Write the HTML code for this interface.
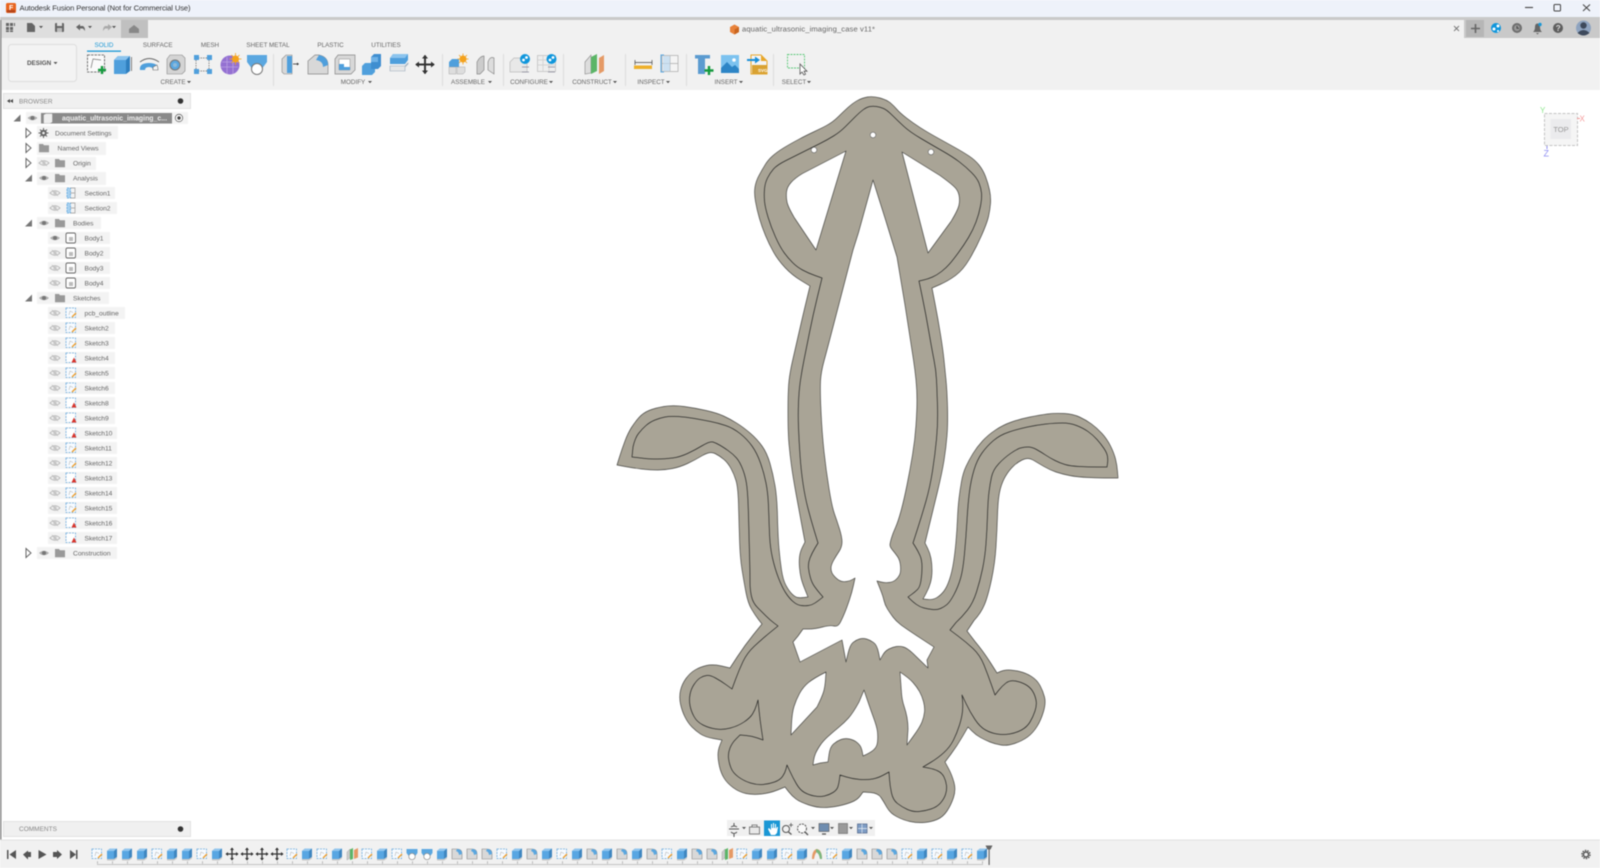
<!DOCTYPE html>
<html><head><meta charset="utf-8"><title>Fusion</title>
<style>html,body{margin:0;padding:0;background:#fff;width:1600px;height:868px;overflow:hidden}svg{display:block;filter:blur(.45px)}text{font-family:"Liberation Sans",sans-serif}</style></head><body>
<svg width="1600" height="868" viewBox="0 0 1600 868" xmlns="http://www.w3.org/2000/svg">
<defs>
<g id="eye"><path d="M-5 0Q0-4.5 5 0Q0 4.500-5 0Z" fill="#b0b0b0"/><circle r="2" fill="#777"/></g>
<g id="eyeh"><path d="M-5 0Q0-4.500 5 0Q0 4.500-5 0Z" fill="none" stroke="#bbb"/><circle r="1.800" fill="#ccc"/><path d="M-3-3L3 3" stroke="#bbb" stroke-width=".7"/></g>
<path id="folder" d="M-5-4h4l1 1.200h5v7h-10z" fill="#999"/>
<path id="topen" d="M-4 3.500h7v-7z" fill="#777"/>
<path id="tclosed" d="M-2-4.500L3 0L-2 4.500Z" fill="#fff" stroke="#666" stroke-width="1"/>
<g id="tsk"><rect x="-5" y="-5" width="9.500" height="9.500" fill="#f7fbff" stroke="#6aa9dc" stroke-width=".8" stroke-dasharray="2 1"/><path d="M-2 2L-1-2L2-.5" fill="none" stroke="#aaa" stroke-width=".5"/><path d="M1 4L5 0" stroke="#f0a030" stroke-width="1.400"/></g>
<g id="tskr"><rect x="-5" y="-5" width="9.500" height="9.500" fill="#fff" stroke="#6aa9dc" stroke-width=".8" stroke-dasharray="2 1"/><path d="M3-.5L5.500 4.500H.5Z" fill="#d9342b"/></g>
<g id="text"><path d="M-5-3L-2-5.500H5V-1L5 3L2 5H-5Z" fill="#3f86c0"/><rect x="-5" y="-3" width="7" height="8" fill="#58a6e2"/><path d="M-5-3L-2-5.500H5L2-3Z" fill="#93c6ee"/><path d="M-5 5h7l3-2v1.500l-3 2h-7z" fill="#c8c8c8"/></g>
<g id="tmove"><path d="M0-6v12M-6 0h12" stroke="#333" stroke-width="1.300"/><path d="M0-6.500l-2 2.500h4zM0 6.500l-2-2.500h4zM-6.500 0l2.500-2v4zM6.500 0l-2.500-2v4z" fill="#333"/></g>
<g id="tfil"><path d="M-5 5V-5H0Q5-5 5 0V5Z" fill="#d8d8d8" stroke="#888" stroke-width=".6"/><path d="M0-5Q5-5 5 0L2 1Q2-2-1-3Z" fill="#5aa7e0"/></g>
<g id="tcon"><path d="M-5-2L-2-5V4L-5 6Z" fill="#ccc" stroke="#999" stroke-width=".4"/><path d="M-2-4.500L1-6V5L-2 6Z" fill="#5cb567"/><path d="M2-4L6-6V3.500L2 5Z" fill="#e59a66"/></g>
<g id="tloft"><path d="M-5.500-5H5.500V-1L2.500 3H-2.500L-5.500-1Z" fill="#5aa7e0"/><circle cy="2.500" r="3.200" fill="#fff" stroke="#888" stroke-width=".7"/></g>
<g id="trev"><path d="M-5 5Q-5-4 0-5Q5-4 5 5H3Q2-1 0-2Q-2-1-3 5Z" fill="#e59a66"/><path d="M-1-5Q5-4 5 5H3Q2-1-1-2Z" fill="#7ab77e"/></g>
<path id="cr" d="M-2-1h4l-2 2.200z" fill="#555"/>
</defs>

<!-- window chrome -->
<rect width="1600" height="868" fill="#fff"/>
<rect width="1600" height="17" fill="#eef2fa"/>
<rect y="17" width="1600" height="3" fill="#c9c9c9"/>
<rect y="20" width="1600" height="18" fill="#dedede"/>
<rect x="121" y="20" width="27" height="18" fill="#c0c0c0"/>
<rect x="148" y="20" width="1316" height="18" fill="#f1f1f1"/>
<rect x="1464" y="20" width="136" height="18" fill="#c9c9c9"/>
<rect x="1466" y="20" width="18" height="17" fill="#b6b6b6"/>
<rect y="38" width="1600" height="52" fill="#f1f1f1"/>
<rect x="0" y="20" width="1.500" height="820" fill="#8a8a8a"/>

<!-- title -->
<rect x="6" y="3" width="10" height="10" rx="1.500" fill="#e8641e"/><rect x="7" y="10" width="8" height="2.500" fill="#b5441a"/><text x="9" y="10" font-size="7" font-weight="bold" fill="#fff">F</text>
<text x="19.500" y="10.500" font-size="7.600" fill="#333" textLength="171" lengthAdjust="spacing">Autodesk Fusion Personal (Not for Commercial Use)</text>
<path d="M1525 7.500h8" stroke="#444" stroke-width="1.100"/><rect x="1554" y="4.500" width="6.500" height="6.500" rx="1" fill="none" stroke="#444" stroke-width="1"/><path d="M1583 4.500l7 6.500M1590 4.500l-7 6.500" stroke="#444" stroke-width="1"/>

<!-- quick access -->
<g fill="#666"><rect x="6" y="23" width="3" height="3"/><rect x="10" y="23" width="3" height="3"/><rect x="14" y="23" width="1" height="3"/><rect x="6" y="27" width="3" height="3"/><rect x="10" y="27" width="3" height="3"/><rect x="6" y="30.500" width="3" height="1.500"/><rect x="10" y="30.500" width="3" height="1.500"/></g>
<path d="M27 23h5l3 3v6h-8z" fill="#666"/><use href="#cr" x="41" y="27"/>
<rect x="55" y="23" width="9" height="9" rx="1" fill="#666"/><rect x="57" y="23" width="5" height="3" fill="#ddd"/><rect x="57" y="28" width="5" height="4" fill="#bbb"/>
<path d="M76 27l4-3v2h3q2 1 2 5l-2-2.500h-3v2z" fill="#666"/><use href="#cr" x="90" y="27"/>
<path d="M112 27l-4-3v2h-3q-2 1-2 5l2-2.500h3v2z" fill="#aaa"/><use href="#cr" x="114" y="27"/>
<path d="M129 29l5-4 5 4v4h-10z" fill="#888"/>

<!-- doc tab -->
<path d="M730 27l4.500-2.500 4.500 2.500v5l-4.500 2.500-4.500-2.500z" fill="#e8823a"/><path d="M734.500 29.500v5l4.500-2.500v-5z" fill="#c9651f"/>
<text x="742" y="31.500" font-size="7.600" fill="#666" textLength="133" lengthAdjust="spacing">aquatic_ultrasonic_imaging_case v11*</text>
<path d="M1454 26l5 5M1459 26l-5 5" stroke="#777" stroke-width=".9"/>
<path d="M1471 28.500h9M1475.500 24v9" stroke="#666" stroke-width="1.600"/>
<circle cx="1496" cy="28" r="5" fill="#0f96dc"/><circle cx="1498" cy="26" r="1.500" fill="#fff"/><circle cx="1494" cy="29" r="1.500" fill="#fff"/><circle cx="1498" cy="31" r="1" fill="#fff"/>
<circle cx="1517" cy="28" r="5" fill="#6e6e6e"/><circle cx="1517" cy="28" r="3" fill="#999"/><path d="M1517 26v2.300h2" stroke="#444" fill="none"/>
<path d="M1533 32q2-1.500 2-5t2.500-3.500 2.500 3.500 2 5zM1536 33h3l-1.500 1.500z" fill="#666"/><circle cx="1540" cy="24.500" r="1.700" fill="#1a97d5"/>
<circle cx="1558" cy="28" r="5" fill="#5e5e5e"/><text x="1555.700" y="31" font-size="8" font-weight="bold" fill="#ddd">?</text>
<circle cx="1583.500" cy="28" r="7.500" fill="#8fa4c0"/><circle cx="1583.500" cy="25.500" r="3.200" fill="#3e4a5c"/><path d="M1577.500 33q6-6 12 0q-6 5-12 0z" fill="#3e4a5c"/>

<!-- tabs -->
<g font-size="6.300" fill="#666" text-anchor="middle">
<text x="104" y="47" fill="#1a97d5">SOLID</text><text x="157.700" y="47">SURFACE</text><text x="210" y="47">MESH</text><text x="268" y="47">SHEET METAL</text><text x="330.500" y="47">PLASTIC</text><text x="386" y="47">UTILITIES</text>
</g>
<rect x="87" y="50.500" width="34" height="1.300" fill="#1a97d5"/>
<rect x="8.500" y="44.500" width="68" height="37" rx="3" fill="#f3f3f3" stroke="#ddd"/>
<text x="27" y="65" font-size="6.300" font-weight="bold" fill="#555">DESIGN</text><use href="#cr" x="55.500" y="63"/>

<!-- labels -->
<g font-size="6.300" fill="#666" text-anchor="middle">
<text x="173" y="84">CREATE</text><text x="353" y="84">MODIFY</text><text x="468" y="84">ASSEMBLE</text><text x="529" y="84">CONFIGURE</text><text x="592" y="84">CONSTRUCT</text><text x="651" y="84">INSPECT</text><text x="726" y="84">INSERT</text><text x="794" y="84">SELECT</text>
</g>
<use href="#cr" x="189" y="82"/><use href="#cr" x="370" y="82"/><use href="#cr" x="490" y="82"/><use href="#cr" x="551" y="82"/><use href="#cr" x="615" y="82"/><use href="#cr" x="668" y="82"/><use href="#cr" x="741" y="82"/><use href="#cr" x="809" y="82"/>
<g fill="#dcdcdc"><rect x="273" y="54" width="1" height="32"/><rect x="442" y="54" width="1" height="32"/><rect x="503" y="54" width="1" height="32"/><rect x="563" y="54" width="1" height="32"/><rect x="625" y="54" width="1" height="32"/><rect x="686" y="54" width="1" height="32"/><rect x="773" y="54" width="1" height="32"/></g>

<!-- toolbar icons -->
<rect x="87.500" y="55" width="17" height="17" fill="#fafafa" stroke="#555" stroke-width=".8" stroke-dasharray="2.500 1"/><path d="M91 68L93 59L101 60" fill="none" stroke="#777" stroke-width=".7"/><path d="M102 66v8M98 70h8" stroke="#159a3e" stroke-width="2.400"/>
<path d="M114 60l4-4h12v15l-4 3h-12z" fill="#2f7fbf"/><rect x="114" y="60" width="12" height="14" fill="#4f9fdc"/><path d="M114 60l4-4h12l-4 4z" fill="#8cc4ee"/><path d="M131.500 57v14" stroke="#666" stroke-width=".8"/>
<path d="M140 70q-1-7 9-7q10 0 9 7h-5q0-3-4-3t-4 3z" fill="#4f9fdc"/><path d="M153 70h5q0-3-1-5l-4 2z" fill="#f4f4f4" stroke="#666" stroke-width=".6"/><path d="M140 62q9-7 19 0" fill="none" stroke="#666" stroke-width=".9"/>
<path d="M167 59l3-4h12l3 3v13l-3 3h-15z" fill="#d4d4d4" stroke="#888" stroke-width=".6"/><circle cx="175" cy="65" r="5" fill="#5aa7e0" stroke="#777"/><circle cx="175" cy="65" r="2" fill="#8db9da"/>
<path d="M198 58h9M198 71h9M196 60v9M209 60v9" stroke="#666" stroke-width=".7" stroke-dasharray="1.500 1"/><g fill="#4f9fdc"><rect x="194" y="55" width="5" height="5"/><rect x="207" y="55" width="5" height="5"/><rect x="194" y="69" width="5" height="5"/><rect x="207" y="69" width="5" height="5"/></g>
<circle cx="230" cy="65" r="9.500" fill="#9470d2"/><path d="M222 62h16M221 67h17M227 57v17M233 57v17" stroke="#b9a0e2" stroke-width=".8"/><circle cx="235.500" cy="59" r="3.500" fill="#f4a21d"/><path d="M235.500 53v12M229.500 59h12M231.500 55l8 8M239.500 55l-8 8" stroke="#f4a21d" stroke-width=".8"/>
<path d="M247 55h20v7l-6 8h-8l-6-8z" fill="#5aa7e0"/><circle cx="257" cy="69" r="5.500" fill="#fff" stroke="#777"/>
<path d="M282 59l4-4h6v19h-8l-2-2z" fill="#d8d8d8" stroke="#888" stroke-width=".6"/><rect x="287" y="56" width="5" height="17" fill="#4f9fdc"/><path d="M293 64h5" stroke="#555"/><path d="M299 64l-2-1.500v3z" fill="#333"/>
<path d="M308 74V61L315 55H319Q328 57 328 65V74Z" fill="#d8d8d8" stroke="#888" stroke-width=".7"/><path d="M319 55Q328 57 328 65L323 67Q323 61 316 60Z" fill="#4f9fdc"/>
<path d="M335 59l3-4h17v15l-4 4h-16z" fill="#d8d8d8" stroke="#888" stroke-width=".7"/><path d="M339 59h11v11h-11z" fill="#fff" stroke="#888" stroke-width=".5"/><path d="M339 64h5v3h6v3h-11z" fill="#4f9fdc"/>
<path d="M362 66l3-3h10v9l-3 3h-10z" fill="#4f9fdc"/><path d="M371 57l3-3h7v12l-3 3h-7z" fill="#3f8ed0"/><path d="M371 57h7v5h-7z" fill="#6fb2e6"/>
<path d="M390 58l3-4h15v6l-3 4h-15z" fill="#4f9fdc"/><path d="M390 58h15l3-4h-15z" fill="#8cc4ee"/><path d="M390 66h15l3-3v1l-3 3v4h-15z" fill="#e7e7e7" stroke="#9ab" stroke-width=".6"/>
<g transform="translate(425 64.500) scale(1.500)"><use href="#tmove"/></g>
<path d="M449 62l3-3h7v8h-10zM449 67h7v7h-7zM457 67h8v5l-2 2h-6z" fill="#4f9fdc"/><path d="M449 67h7v7h-7zM457 67h8v5l-2 2h-6z" fill="#ddd" stroke="#999" stroke-width=".4"/><circle cx="463" cy="59" r="3.500" fill="#f4a21d"/><path d="M463 53.500v11M457.500 59h11M459 55l8 8M467 55l-8 8" stroke="#f4a21d" stroke-width=".8"/>
<path d="M477 74V62Q480 56 484 56V70L480 74Z" fill="#ccc" stroke="#888" stroke-width=".7"/><path d="M488 62Q490 56 494 58V74L488 70Z" fill="#ddd" stroke="#888" stroke-width=".7"/>
<path d="M510 62l4-4h13v14h-17z" fill="#e8e8e8" stroke="#bbb" stroke-width=".7"/><circle cx="525" cy="59" r="5" fill="#0f96dc"/><circle cx="526.500" cy="57.500" r="1.400" fill="#fff"/><circle cx="523.500" cy="60" r="1.400" fill="#fff"/><path d="M522 67h7M522 72h7" stroke="#889" stroke-width=".8"/>
<rect x="537.500" y="55.500" width="18" height="16" fill="#eee" stroke="#bbb" stroke-width=".7"/><path d="M537.500 60h18M537.500 65h18M543 56v15M549 56v15" stroke="#ccc" stroke-width=".7"/><circle cx="551.500" cy="59" r="5" fill="#0f96dc"/><circle cx="553" cy="57.500" r="1.400" fill="#fff"/><circle cx="550" cy="60" r="1.400" fill="#fff"/><path d="M548 67h7M548 72h7" stroke="#889" stroke-width=".8"/>
<path d="M585 62l6-7v18l-6 1z" fill="#ddd" stroke="#888" stroke-width=".6"/><path d="M591 57l6-3v17l-6 3z" fill="#5cb567"/><path d="M599 58l5-3v16l-5 3z" fill="#e59a66"/>
<path d="M635 60v5M652 60v5M635 62.500h17" stroke="#444" stroke-width=".7"/><rect x="634" y="65.500" width="18" height="3.500" fill="#eeb02a"/>
<rect x="662" y="55.500" width="16" height="16" fill="#f4f4f4" stroke="#aaa" stroke-width=".7"/><path d="M670 56v15M662 63.500h16" stroke="#aaa" stroke-width=".7"/><path d="M664 55h-3v17h3" fill="none" stroke="#5aa7e0" stroke-width="1"/><rect x="663" y="56" width="7" height="15" fill="#bcd9f0" opacity=".7"/>
<rect x="695" y="55" width="15" height="3.500" fill="#5b9bd0"/><path d="M698 58.500h7V74h-7z" fill="#5b9bd0"/><path d="M709 66v9M704.500 70.500h9" stroke="#159a3e" stroke-width="2.400"/>
<rect x="721" y="55" width="18" height="18" fill="#7cc2ef"/><circle cx="734" cy="60" r="1.800" fill="#fff"/><path d="M721 73v-5l6-6 5 5 3-2 4 4v4z" fill="#2d85c6"/>
<path d="M751 55h10l6 6v13h-16z" fill="#f4f4f4" stroke="#e8a72a"/><path d="M761 55v6h6z" fill="#e8a72a"/><rect x="752" y="65" width="15" height="9" fill="#d9a232"/><text x="758" y="72" font-size="4.500" font-weight="bold" fill="#fff">SVG</text><path d="M747 60h9" stroke="#1a8fd8" stroke-width="2"/><path d="M760 60l-5-3.500v7z" fill="#1a8fd8"/>
<rect x="787.500" y="54.500" width="17" height="13.500" fill="none" stroke="#5dc97a" stroke-width=".9" stroke-dasharray="2 1"/><path d="M800 64v10l2-2 2 3 1.500-.8-1.500-3h3z" fill="#fff" stroke="#555" stroke-width=".8"/>

<!-- view cube -->
<rect x="1544.500" y="113.500" width="33" height="32" fill="#f5f5f5" stroke="#c4c4c4" stroke-dasharray="3 1.500"/><rect x="1550.500" y="119" width="20.500" height="20" fill="#ebebed"/>
<text x="1561" y="132" font-size="7.500" fill="#999" text-anchor="middle">TOP</text>
<text x="1540" y="113" font-size="8" fill="#8fe88f">Y</text><text x="1579.500" y="121.500" font-size="8" fill="#f59a9a">X</text><text x="1543.500" y="156.500" font-size="9" fill="#8f8ff2">Z</text>
<path d="M1577 118.500h3" stroke="#f59a9a"/><path d="M1547 146v3" stroke="#8f8ff2"/>

<!-- browser -->
<rect x="3.500" y="93.500" width="187" height="15" fill="#f0f0f0" stroke="#e2e2e2"/>
<path d="M7 101l3-2v4zM10 101l3-2v4z" fill="#444"/><text x="19" y="103.500" font-size="6.500" fill="#888">BROWSER</text><circle cx="180.500" cy="101" r="2.800" fill="#333"/>
<rect x="26" y="112" width="162" height="12" fill="#f3f3f3"/>
<use href="#topen" x="17.500" y="118"/><use href="#eye" x="32.500" y="118"/>
<rect x="41" y="113" width="131" height="10.500" fill="#8a8a8a"/><path d="M44 115l2-1h6v8l-2 1h-6z" fill="#eee" stroke="#fff" stroke-width=".4"/>
<text x="62" y="120.500" font-size="6.900" font-weight="bold" fill="#eee" textLength="105" lengthAdjust="spacing">aquatic_ultrasonic_imaging_c...</text>
<circle cx="179" cy="118" r="3.700" fill="#fff" stroke="#666" stroke-width=".8"/><circle cx="179" cy="118" r="1.700" fill="#444"/>

<g fill="#f3f3f3">
<rect x="37" y="126" width="81" height="13"/><rect x="37" y="142" width="69" height="13"/><rect x="37" y="157" width="59" height="13"/><rect x="37" y="172" width="69" height="13"/>
<rect x="48" y="187" width="67" height="12"/><rect x="48" y="202" width="69" height="12"/><rect x="37" y="217" width="64" height="12"/>
<rect x="48" y="232" width="62" height="12"/><rect x="48" y="247" width="62" height="12"/><rect x="48" y="262" width="62" height="12"/><rect x="48" y="277" width="62" height="12"/>
<rect x="37" y="292" width="72" height="12"/><rect x="48" y="307" width="77" height="12"/>
<rect x="48" y="322" width="67" height="12"/><rect x="48" y="337" width="67" height="12"/><rect x="48" y="352" width="67" height="12"/><rect x="48" y="367" width="67" height="12"/><rect x="48" y="382" width="67" height="12"/><rect x="48" y="397" width="67" height="12"/><rect x="48" y="412" width="67" height="12"/>
<rect x="48" y="427" width="69" height="12"/><rect x="48" y="442" width="69" height="12"/><rect x="48" y="457" width="69" height="12"/><rect x="48" y="472" width="69" height="12"/><rect x="48" y="487" width="69" height="12"/><rect x="48" y="502" width="69" height="12"/><rect x="48" y="517" width="69" height="12"/><rect x="48" y="532" width="69" height="12"/>
<rect x="37" y="547" width="80" height="12"/>
</g>
<use href="#tclosed" x="28" y="133"/><use href="#tclosed" x="28" y="148"/><use href="#tclosed" x="28" y="163"/><use href="#tclosed" x="28" y="553"/>
<use href="#topen" x="29" y="178"/><use href="#topen" x="29" y="223"/><use href="#topen" x="29" y="298"/>
<circle cx="43.500" cy="133" r="3.300" fill="#666"/><path d="M43.500 128v10M38.500 133h10M40 129.500l7 7M47 129.500l-7 7" stroke="#666" stroke-width="1"/><circle cx="43.500" cy="133" r="1.300" fill="#f3f3f3"/>
<use href="#folder" x="44" y="148"/>
<use href="#eyeh" x="44" y="163"/><use href="#folder" x="60" y="163"/>
<use href="#eye" x="44" y="178"/><use href="#folder" x="60" y="178"/>
<use href="#eye" x="44" y="223"/><use href="#folder" x="60" y="223"/>
<use href="#eye" x="44" y="298"/><use href="#folder" x="60" y="298"/>
<use href="#eye" x="44" y="553"/><use href="#folder" x="60" y="553"/>
<rect x="67" y="188" width="3.500" height="10" fill="#a8d0ef" stroke="#5aa7e0" stroke-width=".8" stroke-dasharray="2 1"/><path d="M70.500 188h4.500v10h-4.500M70.500 193h4.500" fill="none" stroke="#999" stroke-width=".7"/>
<rect x="67" y="203" width="3.500" height="10" fill="#a8d0ef" stroke="#5aa7e0" stroke-width=".8" stroke-dasharray="2 1"/><path d="M70.500 203h4.500v10h-4.500M70.500 208h4.500" fill="none" stroke="#999" stroke-width=".7"/>
<use href="#eyeh" x="55" y="193"/><use href="#eyeh" x="55" y="208"/>
<use href="#eye" x="55" y="238"/><use href="#eyeh" x="55" y="253"/><use href="#eyeh" x="55" y="268"/><use href="#eyeh" x="55" y="283"/>
<g fill="#fff" stroke="#666" stroke-width=".9"><rect x="66" y="233" width="9.500" height="10" rx="1.500"/><rect x="66" y="248" width="9.500" height="10" rx="1.500"/><rect x="66" y="263" width="9.500" height="10" rx="1.500"/><rect x="66" y="278" width="9.500" height="10" rx="1.500"/></g>
<g fill="#bbb"><rect x="69" y="237" width="4" height="4"/><rect x="69" y="252" width="4" height="4"/><rect x="69" y="267" width="4" height="4"/><rect x="69" y="282" width="4" height="4"/></g>
<use href="#eyeh" x="55" y="313"/><use href="#eyeh" x="55" y="328"/><use href="#eyeh" x="55" y="343"/><use href="#eyeh" x="55" y="358"/><use href="#eyeh" x="55" y="373"/><use href="#eyeh" x="55" y="388"/><use href="#eyeh" x="55" y="403"/><use href="#eyeh" x="55" y="418"/><use href="#eyeh" x="55" y="433"/><use href="#eyeh" x="55" y="448"/><use href="#eyeh" x="55" y="463"/><use href="#eyeh" x="55" y="478"/><use href="#eyeh" x="55" y="493"/><use href="#eyeh" x="55" y="508"/><use href="#eyeh" x="55" y="523"/><use href="#eyeh" x="55" y="538"/>
<use href="#tsk" x="71" y="313"/><use href="#tsk" x="71" y="328"/><use href="#tsk" x="71" y="343"/><use href="#tskr" x="71" y="358"/><use href="#tsk" x="71" y="373"/><use href="#tsk" x="71" y="388"/><use href="#tskr" x="71" y="403"/><use href="#tskr" x="71" y="418"/><use href="#tskr" x="71" y="433"/><use href="#tsk" x="71" y="448"/><use href="#tsk" x="71" y="463"/><use href="#tskr" x="71" y="478"/><use href="#tsk" x="71" y="493"/><use href="#tsk" x="71" y="508"/><use href="#tskr" x="71" y="523"/><use href="#tskr" x="71" y="538"/>
<g font-size="6.700" fill="#666">
<text x="55" y="135.500">Document Settings</text><text x="57.500" y="150.500">Named Views</text><text x="73" y="165.500">Origin</text><text x="73" y="180.500">Analysis</text>
<text x="84.500" y="195.500">Section1</text><text x="84.500" y="210.500">Section2</text><text x="73" y="225.500">Bodies</text>
<text x="84.500" y="240.500">Body1</text><text x="84.500" y="255.500">Body2</text><text x="84.500" y="270.500">Body3</text><text x="84.500" y="285.500">Body4</text>
<text x="73" y="300.500">Sketches</text><text x="84.500" y="315.500">pcb_outline</text>
<text x="84.500" y="330.500">Sketch2</text><text x="84.500" y="345.500">Sketch3</text><text x="84.500" y="360.500">Sketch4</text><text x="84.500" y="375.500">Sketch5</text><text x="84.500" y="390.500">Sketch6</text><text x="84.500" y="405.500">Sketch8</text><text x="84.500" y="420.500">Sketch9</text>
<text x="84.500" y="435.500">Sketch10</text><text x="84.500" y="450.500">Sketch11</text><text x="84.500" y="465.500">Sketch12</text><text x="84.500" y="480.500">Sketch13</text><text x="84.500" y="495.500">Sketch14</text><text x="84.500" y="510.500">Sketch15</text><text x="84.500" y="525.500">Sketch16</text><text x="84.500" y="540.500">Sketch17</text>
<text x="73" y="555.500">Construction</text>
</g>

<!-- comments -->
<rect x="3.500" y="821.500" width="187" height="15" fill="#f0f0f0" stroke="#e2e2e2"/>
<text x="19" y="831" font-size="6.500" fill="#888">COMMENTS</text><circle cx="180.500" cy="829" r="2.800" fill="#333"/>

<!-- model -->
<path fill="#a9a496" fill-rule="evenodd" stroke="#4a4a46" stroke-width=".7" stroke-linejoin="round" d="M880 98Q873 96 867.500 97Q862 98 857.500 100.500Q853 103 848 107.500Q843 112 838 117Q833 122 826.500 125.500Q820 129 813.500 132Q807 135 798.500 139.500Q790 144 783.500 148Q777 152 772.500 156Q768 160 765 165Q762 170 759 175.500Q756 181 755 187Q754 193 755.500 201.500Q757 210 759.500 218.500Q762 227 765.500 235.500Q769 244 773.500 252Q778 260 785 267.500Q792 275 801 280.500L810 286L806.500 300.500Q803 315 799 332.500Q795 350 792.500 361Q790 372 789 381Q788 390 788 411.500Q788 433 789 444Q790 455 791.500 466Q793 477 796 493.500Q799 510 802 526L805 542L802.500 547Q800 552 799.500 557Q799 562 799.500 567.500Q800 573 801 577.500Q802 582 805 589.500L808 597L804 597.500Q800 598 797.500 597.500Q795 597 792 594Q789 591 786 585.500Q783 580 781.500 570Q780 560 779 548.500Q778 537 777.500 517Q777 497 775 485.500Q773 474 770 463.500Q767 453 762 446Q757 439 750 433Q743 427 736.500 423Q730 419 723.500 416Q717 413 706 410.500Q695 408 684 406.500Q673 405 664 406.500Q655 408 649 410.500Q643 413 639 417.500Q635 422 631.500 427.500Q628 433 625 441Q622 449 619.500 457L617 465L625 466.500Q633 468 641.500 469Q650 470 657.500 470Q665 470 672.500 468.500Q680 467 687.500 463.500Q695 460 702.500 455.500Q710 451 715 453.500Q720 456 724 459.500Q728 463 731 468.500Q734 474 736 480.500Q738 487 738.500 503.500Q739 520 739.500 538.500Q740 557 742 569.500Q744 582 746 592.500Q748 603 751.500 609Q755 615 758.500 619.500L762 624L753.500 634.500Q745 645 737.500 656.500L730 668L721.500 666Q713 664 706.500 665.500Q700 667 695 670Q690 673 686 678.500Q682 684 680.500 690.500Q679 697 680.500 704Q682 711 685 717Q688 723 692 727Q696 731 700.500 734Q705 737 713.500 738.500L722 740L720 745Q718 750 718 755Q718 760 719.500 766.500Q721 773 724 778Q727 783 733 787.500Q739 792 746 793.500Q753 795 761.500 794Q770 793 777.500 790L785 787L788.500 791.500Q792 796 796 799Q800 802 809 805Q818 808 826.500 807.500Q835 807 842.500 805Q850 803 854 801Q858 799 860.500 795.500L863 792L870.500 792.500Q878 793 881 797.500Q884 802 887 807.500Q890 813 896.500 816.500Q903 820 910 821.500Q917 823 924 822.500Q931 822 937 819.500Q943 817 947 811Q951 805 953.500 797.500Q956 790 954 782.500Q952 775 948.500 768.500L945 762L951 754Q957 746 962.500 736.500L968 727L972 731Q976 735 980.500 737.500Q985 740 990 742Q995 744 1001 745Q1007 746 1014.500 743.500Q1022 741 1027.500 737Q1033 733 1037 726.500Q1041 720 1043.500 711.500Q1046 703 1044.500 697Q1043 691 1040 685.500Q1037 680 1031.500 676.500Q1026 673 1019.500 671.500Q1013 670 1008.500 670Q1004 670 1000.500 671.500L997 673L990 662Q983 651 975 641.500L967 631L974 620.500Q981 613 984.500 604.500Q988 596 991.500 579.500Q995 563 996 546.500Q997 530 997.500 515Q998 500 999.500 492.500Q1001 485 1004 479Q1007 473 1011.500 468Q1016 463 1022 460Q1028 457 1033 460Q1038 463 1044 466.500Q1050 470 1056 472Q1062 474 1069.500 475.500Q1077 477 1088.500 477.500Q1100 478 1109 478L1118 478L1117.500 471.500Q1117 465 1115.500 459Q1114 453 1110.500 446Q1107 439 1102 433.500Q1097 428 1091.500 424Q1086 420 1079.500 417Q1073 414 1064 413.500Q1055 413 1047.500 414Q1040 415 1030 417Q1020 419 1011.500 422Q1003 425 995.500 430Q988 435 982.500 441Q977 447 973 453.500Q969 460 966 466.500Q963 473 961.500 481.500Q960 490 959 498.500Q958 507 957.500 518.500Q957 530 956 541.500Q955 553 953.500 562.500Q952 572 949.500 579.500Q947 587 944 591Q941 595 937 597.500Q933 600 928 599.500L923 599L926 593.500Q929 588 930.500 582.500Q932 577 932 570.500Q932 564 931 558.500Q930 553 927.500 548L925 543L929 526.500Q933 510 937.500 491.500Q942 473 944 460.500Q946 448 947 435.500Q948 423 947.500 406.500Q947 390 946 380Q945 370 944 360Q943 350 940.500 334.500Q938 319 935 303.500L932 288L940 284.500Q948 281 955.500 275.500Q963 270 969.500 259Q976 248 981.500 235.500Q987 223 988.500 216.500Q990 210 990.500 203.500Q991 197 989.500 190Q988 183 985.500 176.500Q983 170 979 165Q975 160 969 156Q963 152 954 147Q945 142 936 137Q927 132 920 127.500Q913 123 906.500 118Q900 113 897 109.500Q894 106 890.500 103Q887 100 880 98Z
M846 151L802.500 173.500Q795 178 791 182.500Q787 187 786.500 192Q786 197 787 202Q788 207 794.500 218L816 250Z
M902 152L940 175.500Q949 182 953.500 186Q958 190 959 195Q960 200 959 205Q958 210 951 221.500L928 253Z
M873 180L858.500 232.500L853 250L846.500 275Q840 300 833.500 325Q827 350 824 361Q821 372 820.500 381Q820 390 821 411.500Q822 433 824 451.500Q826 470 829 488.500Q832 507 834.500 514Q837 521 839.500 529Q842 537 842 542Q842 547 839 551.500Q836 556 833.500 560.500Q831 565 831 568Q831 571 832 573Q833 575 835.500 577.500Q838 580 840.500 581Q843 582 846.500 581.500Q850 581 852.500 579.500L855 578L853.500 585Q852 592 849.500 599.500Q847 607 845 612Q843 617 840.500 622Q838 627 834 626Q830 625 822.500 627Q815 629 809 629L803 629L798 636L793 642L796.500 652L800 662L821 651L842 640L846 662L848 653.500Q850 645 853 642.500Q856 640 859.500 639Q863 638 866.500 639Q870 640 873.500 642.500Q877 645 878.500 652.500L880 660L882.500 655.500Q885 651 889 649Q893 647 896.500 646.500Q900 646 903.500 647Q907 648 912.500 653L928 668L927 660L934 647L919.500 637.500Q905 628 900.500 624.500Q896 621 893 617Q890 613 887.500 609Q885 605 884 600.500Q883 596 880 588.500L877 581L881 582Q885 583 889 582.500Q893 582 895.500 580Q898 578 899.500 575Q901 572 900.500 566Q900 560 897.500 556.500Q895 553 892.500 550Q890 547 890 545Q890 543 891.500 538Q893 533 895.500 527.500Q898 522 901 511Q904 500 907 485Q910 470 912.500 455Q915 440 916 425Q917 410 917 400Q917 390 916 380Q915 370 913.500 360Q912 350 908.500 327.500L905 305Q905 305 901 281L897 257L885 218Z
M826 672Q814 678 808.500 682.500Q803 687 799.500 693.500Q796 700 794 706.500Q792 713 791.500 724L791 735L804 721L817 707Q822 697 823.500 692Q825 687 825.500 679.500Z
M864 690L859 702Q853 713 848.500 718Q844 723 838.500 727.500Q833 732 828 736.500Q823 741 820 745.500Q817 750 815.500 753.500Q814 757 813.500 761L813 765L820.500 763L828 762L829 754.500Q830 747 833.500 744Q837 741 841 739.500Q845 738 849.500 739Q854 740 857 742.500Q860 745 861 747.500Q862 750 862.500 753L863 756Q870 753 873.500 750Q877 747 877.500 742Q878 737 877.500 732Q877 727 873.500 717.500Q870 708 864 690Z
M900 672Q901 686 901.500 693Q902 700 904 706Q906 712 907 717.500Q908 723 908 729L907 745L913.500 736Q920 727 922 722Q924 717 924.500 712Q925 707 923.500 701.500Q922 696 919.500 691.500Q917 687 913 682.500Q909 678 900 672Z"/>
<g fill="#fff" stroke="#666" stroke-width=".6"><circle cx="814" cy="150" r="2.800"/><circle cx="873" cy="135" r="2.800"/><circle cx="931" cy="152" r="2.800"/></g>
<path fill="none" stroke="#2c2c2a" stroke-width=".75" stroke-linejoin="round" d="M822 278L815 275.500Q808 273 802.500 270Q797 267 792.500 262.500Q788 258 784 252.500Q780 247 775.500 237Q771 227 768 217Q765 207 764.500 201Q764 195 764.500 189Q765 183 767.500 178Q770 173 773.500 169Q777 165 786 160.500Q795 156 804 151.500Q813 147 820 143.500Q827 140 833.500 136Q840 132 845 127Q850 122 855 117Q860 112 863.500 109.500Q867 107 870 106.500Q873 106 876.500 106.500Q880 107 883.500 108.500Q887 110 892.500 115.500Q898 121 904 126.500Q910 132 921 138.500Q932 145 942.500 151Q953 157 959.500 162Q966 167 971.500 172.500Q977 178 979 183Q981 188 981.500 193Q982 198 980.500 206Q979 214 976 222Q973 230 968.500 237.500Q964 245 958.500 252.500Q953 260 949.500 264Q946 268 941.500 271.500Q937 275 932.500 277Q928 279 923.500 280L919 281L922.500 298Q926 315 929 332.500Q932 350 934 360Q936 370 936.500 380Q937 390 937.500 406.500Q938 423 936.500 439Q935 455 932.500 471Q930 487 926 501Q922 515 917.500 529L913 543L915.500 547Q918 551 920 555.500Q922 560 922 567Q922 574 921 580.500Q920 587 917.500 589.500Q915 592 911.500 594.500L908 597L910.500 599.500Q913 602 916.500 604.500Q920 607 924 608Q928 609 932.500 609.500Q937 610 940.500 608.500Q944 607 947 604.500Q950 602 954 594.500Q958 587 960.500 578.500Q963 570 964.500 553.500Q966 537 967 520Q968 503 969.500 491.500Q971 480 974 470Q977 460 982 453Q987 446 993.500 440.500Q1000 435 1009 432Q1018 429 1027.500 427Q1037 425 1046 424Q1055 423 1062.500 423Q1070 423 1076.500 425.500Q1083 428 1088 431.500Q1093 435 1097 439.500Q1101 444 1104 448.500Q1107 453 1107.500 456.500Q1108 460 1107.500 463.500L1107 467L1097.500 467Q1088 467 1079 466.500Q1070 466 1065 464.500Q1060 463 1055 460.500Q1050 458 1045.500 455Q1041 452 1036.500 449.500Q1032 447 1028 447Q1024 447 1020.500 448Q1017 449 1010.500 453.500Q1004 458 998.500 464Q993 470 991.500 477Q990 484 989 492Q988 500 987.500 515Q987 530 986 543.500Q985 557 982.500 569Q980 581 976.500 592Q973 603 967.500 610Q962 617 956 622.500L950 630L958 636Q966 642 973 648.500Q980 655 984 665Q988 675 991.500 685L995 695L998.500 690.500Q1002 686 1006 683Q1010 680 1015.500 681Q1021 682 1025.500 684.500Q1030 687 1032.500 691Q1035 695 1036 700Q1037 705 1035 711Q1033 717 1030 722Q1027 727 1021.500 730Q1016 733 1009.500 734Q1003 735 997 734Q991 733 985.500 730Q980 727 975 719.500Q970 712 966 703.500L962 695L962.500 700Q963 705 962.500 711Q962 717 959.500 725Q957 733 953.500 740Q950 747 944 752.500Q938 758 930.500 762.500L923 767L928.500 768Q934 769 938 771Q942 773 944 777Q946 781 946.500 785.500Q947 790 945.500 794.500Q944 799 940.500 803Q937 807 931 809Q925 811 919 811.500Q913 812 907.500 809.500Q902 807 897.500 803.500Q893 800 891.500 793Q890 786 889.500 779L889 772L883.500 775Q878 778 872.500 779Q867 780 860 779.500Q853 779 846.500 777L840 775L839.500 779Q839 783 838 786.500Q837 790 833 792.500Q829 795 824.500 796Q820 797 814.500 796Q809 795 804.500 792.500Q800 790 796.500 784Q793 778 790 771.500L787 765L786 769Q785 773 782.500 776.500Q780 780 774.500 782Q769 784 763 784.500Q757 785 750.500 783Q744 781 738.500 777Q733 773 731 768Q729 763 728.500 758Q728 753 730 748Q732 743 736 739L740 735L746 735.500Q752 736 757.500 738L763 740L761.500 730Q760 720 759 710L758 700L756.500 705Q755 710 752.500 714Q750 718 744 722Q738 726 730.500 728Q723 730 716 729Q709 728 703 725Q697 722 694 716.500Q691 711 690 705.500Q689 700 690 694.500Q691 689 694 684.500Q697 680 700 678Q703 676 706.500 675.500Q710 675 715.500 678Q721 681 726.500 685L732 689L735.500 679.500Q739 670 743 661.500Q747 653 754.500 646Q762 639 770 632.500L778 626L774 623Q770 620 766 616Q762 612 757.500 607.500Q753 603 751.500 596.500Q750 590 750 581.500Q750 573 749.500 554Q749 535 748.500 516Q748 497 747 487.500Q746 478 743 470Q740 462 736.500 458Q733 454 728 450.500Q723 447 719.500 445Q716 443 713 442Q710 441 702.500 445.500Q695 450 687.500 453.500Q680 457 672.500 458Q665 459 657.500 459Q650 459 645 458.500L632 457L633 447Q635 438 638.500 433.500Q642 429 646 425.500Q650 422 655 420Q660 418 665 417Q670 416 678 416.500Q686 417 694.500 418.500Q703 420 710.500 421.500Q718 423 725.500 425.500Q733 428 740 433.500Q747 439 752 446Q757 453 760.500 463Q764 473 766 483Q768 493 768.500 506.500Q769 520 769.500 533.500Q770 547 772.500 558Q775 569 778.500 578Q782 587 785.500 592.500Q789 598 793 601.500Q797 605 801 605.500Q805 606 808.500 605.500Q812 605 815 603Q818 601 820.500 599L823 597L820 593.500Q817 590 814.500 586.500Q812 583 810.500 578Q809 573 808.500 568Q808 563 810 558Q812 553 815 548L818 543L814.500 531.500Q811 520 808 508.500Q805 497 803 483.500Q801 470 800 455Q799 440 798.500 427.500Q798 415 798.500 402.500Q799 390 800.500 380Q802 370 804 360Q806 350 809.500 332.500Q813 315 817.500 296.500L822 278Z"/>

<!-- nav bar -->
<rect x="727" y="820" width="148" height="16" fill="#f0f0f0"/>
<rect x="764" y="820.500" width="16" height="15.500" fill="#1a97d5"/>
<path d="M734 823v3M734 834v3M729 829h10M731 827q3-2 6 0M731 832q3 3 6 0" fill="none" stroke="#555" stroke-width="1"/><use href="#cr" x="744" y="828"/>
<rect x="749.500" y="827" width="10" height="7" fill="#e8e8e8" stroke="#666" stroke-width=".8"/><path d="M752 827v-2h5v2" fill="none" stroke="#666" stroke-width=".8"/>
<path d="M768 829l1-1 2 2v-6h1v4h1v-5h1v5h1v-4h1v5l1-2h1l-1 6-2 2h-4z" fill="#fff"/>
<circle cx="786" cy="829" r="3.500" fill="none" stroke="#555"/><path d="M788.500 832l3 2.500" stroke="#555" stroke-width="1.300"/><path d="M791 823v4M789 825h4" stroke="#555" stroke-width=".8"/>
<circle cx="802" cy="828.500" r="4.500" fill="#fafafa" stroke="#555" stroke-dasharray="2 1"/><path d="M805 832l3 3" stroke="#555" stroke-width="1.300"/><use href="#cr" x="813" y="828"/>
<rect x="819" y="823.500" width="10" height="8" fill="#6f8db0" stroke="#555" stroke-width=".6"/><path d="M822 834h4" stroke="#555" stroke-width="1.300"/><use href="#cr" x="832" y="828"/>
<rect x="838.500" y="823.500" width="9" height="10" fill="#9a9a9a" stroke="#666" stroke-width=".6"/><use href="#cr" x="851" y="828"/>
<rect x="857.500" y="824" width="9.500" height="9" fill="#7d9cc4" stroke="#5a6f92" stroke-width=".8"/><path d="M862 824v9M858 828.500h9" stroke="#e8eef5" stroke-width=".7"/><use href="#cr" x="871" y="828"/>

<!-- timeline -->
<rect y="840" width="1600" height="28" fill="#f1f1f1"/><rect y="839.500" width="1600" height="1" fill="#e2e2e2"/>
<g fill="#555"><path d="M7 850h1.500v9H7zM16 850v9l-6.500-4.500z"/><path d="M23 854.500l5-4v9zM28 852h3v5h-3z"/><path d="M38.500 850l8 4.500-8 4.500z"/><path d="M57 850l5 4.500-5 4.500zM53 852h4v5h-4z"/><path d="M70 850v9l6-4.500zM76 850h1.500v9H76z"/></g>
<use href="#tsk" x="97" y="854"/><use href="#text" x="112" y="854"/><use href="#text" x="127" y="854"/><use href="#text" x="142" y="854"/><use href="#tsk" x="157" y="854"/><use href="#text" x="172" y="854"/><use href="#text" x="187" y="854"/><use href="#tsk" x="202" y="854"/><use href="#text" x="217" y="854"/><use href="#tmove" x="232" y="854"/><use href="#tmove" x="247" y="854"/><use href="#tmove" x="262" y="854"/><use href="#tmove" x="277" y="854"/><use href="#tsk" x="292" y="854"/><use href="#text" x="307" y="854"/><use href="#tsk" x="322" y="854"/><use href="#text" x="337" y="854"/><use href="#tcon" x="352" y="854"/><use href="#tsk" x="367" y="854"/><use href="#text" x="382" y="854"/><use href="#tsk" x="397" y="854"/><use href="#tloft" x="412" y="854"/><use href="#tloft" x="427" y="854"/><use href="#text" x="442" y="854"/><use href="#tfil" x="457" y="854"/><use href="#tfil" x="472" y="854"/><use href="#tfil" x="487" y="854"/><use href="#tsk" x="502" y="854"/><use href="#text" x="517" y="854"/><use href="#tfil" x="532" y="854"/><use href="#text" x="547" y="854"/><use href="#tsk" x="562" y="854"/><use href="#text" x="577" y="854"/><use href="#tfil" x="592" y="854"/><use href="#text" x="607" y="854"/><use href="#tfil" x="622" y="854"/><use href="#text" x="637" y="854"/><use href="#tfil" x="652" y="854"/><use href="#tsk" x="667" y="854"/><use href="#text" x="682" y="854"/><use href="#tfil" x="697" y="854"/><use href="#tfil" x="712" y="854"/><use href="#tcon" x="727" y="854"/><use href="#tsk" x="742" y="854"/><use href="#text" x="757" y="854"/><use href="#text" x="772" y="854"/><use href="#tsk" x="787" y="854"/><use href="#text" x="802" y="854"/><use href="#trev" x="817" y="854"/><use href="#tsk" x="832" y="854"/><use href="#text" x="847" y="854"/><use href="#tfil" x="862" y="854"/><use href="#tfil" x="877" y="854"/><use href="#tfil" x="892" y="854"/><use href="#tsk" x="907" y="854"/><use href="#text" x="922" y="854"/><use href="#tsk" x="937" y="854"/><use href="#text" x="952" y="854"/><use href="#tsk" x="967" y="854"/><use href="#text" x="982" y="854"/>
<line x1="97" y1="862.500" x2="983" y2="862.500" stroke="#bbb" stroke-width="2.500" stroke-dasharray="1 14"/><rect x="97" y="864" width="886" height="1" fill="#c4c4c4"/>
<path d="M985.500 845.500h7l-2 4h-3z" fill="#666"/><rect x="988.500" y="848" width="1.200" height="17" fill="#666"/>
<circle cx="1586" cy="854.500" r="2.500" fill="none" stroke="#555" stroke-width="1.400"/><circle cx="1586" cy="854.500" r="4" fill="none" stroke="#555" stroke-width="1.400" stroke-dasharray="1.500 1"/>
</svg>
</body></html>
